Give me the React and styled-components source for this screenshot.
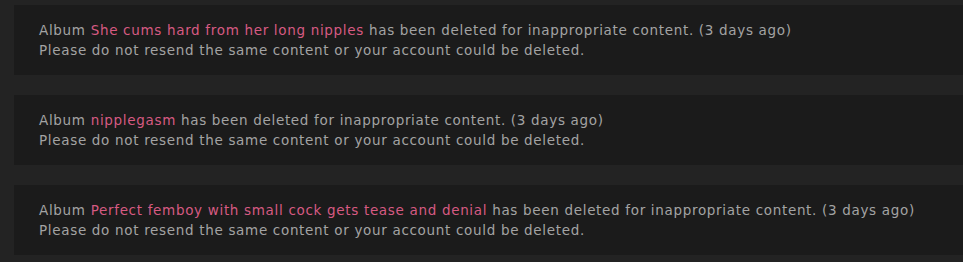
import React from "react";
import styled, { createGlobalStyle } from "styled-components";

const GlobalStyle = createGlobalStyle`
  html, body {
    margin: 0;
    padding: 0;
    background: #232323;
    overflow: hidden;
  }
`;

const List = styled.section`
  display: flex;
  flex-direction: column;
  gap: 20px;
  padding: 5px 0 8px 14px;
  font-family: "DejaVu Sans", "Open Sans", sans-serif;
`;

const Notice = styled.div`
  background-color: #1b1b1b;
  padding: 15px 25px;
  margin-right: -20px;
  color: #a3a3a3;
  font-size: 13.5px;
  line-height: 20px;
  letter-spacing: 0.68px;
  p {
    margin: 0;
    white-space: nowrap;
  }
`;

const AlbumName = styled.span`
  color: #d65a82;
`;

const notices = [
  { title: "She cums hard from her long nipples", when: "3 days ago" },
  { title: "nipplegasm", when: "3 days ago" },
  { title: "Perfect femboy with small cock gets tease and denial", when: "3 days ago" },
];

function App() {
  return (
    <>
      <GlobalStyle />
      <List>
        {notices.map((n, i) => (
          <Notice key={i}>
            <p>
              Album <AlbumName>{n.title}</AlbumName> has been deleted for inappropriate content. ({n.when})
            </p>
            <p>Please do not resend the same content or your account could be deleted.</p>
          </Notice>
        ))}
      </List>
    </>
  );
}

export default App;
